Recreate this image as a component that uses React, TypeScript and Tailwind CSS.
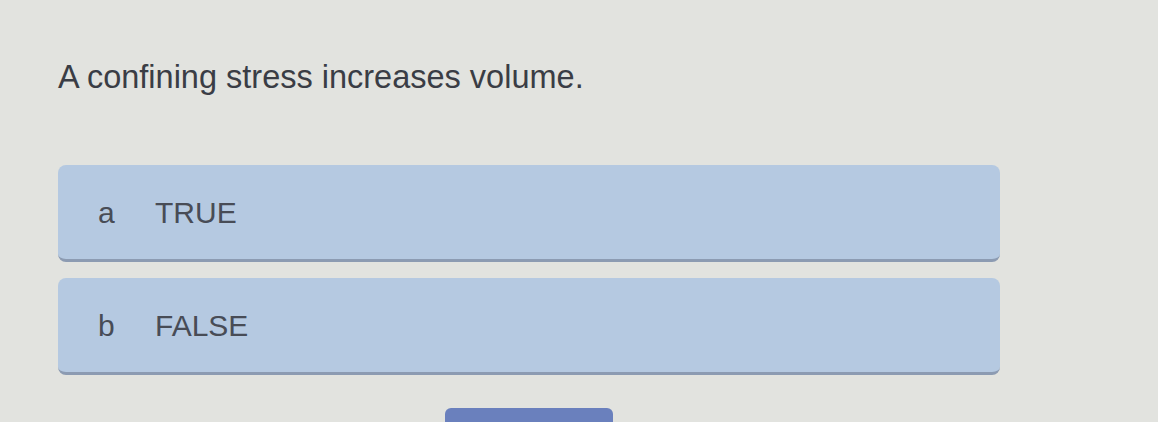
export default function App() {
  const options = [
    { key: "a", label: "TRUE" },
    { key: "b", label: "FALSE" },
  ];
  return (
    <div
      className="w-[1158px] h-[422px] overflow-hidden bg-[#e2e3df] pl-[58px] pr-[158px]"
      style={{ fontFamily: '"Liberation Sans", Arial, sans-serif' }}
    >
      <h1 className="pt-[57px] text-[32.5px] leading-[40px] text-[#3a3d45]">
        A confining stress increases volume.
      </h1>
      <div className="mt-[68px] flex flex-col gap-[16px]">
        {options.map((o) => (
          <div
            key={o.key}
            className="h-[97px] rounded-[8px] bg-[#b5c9e1] border-b-[3px] border-[#8c9bb2] flex items-center pl-[40px] text-[30px] text-[#484c56]"
          >
            <span className="w-[57px]">{o.key}</span>
            <span>{o.label}</span>
          </div>
        ))}
      </div>
      <div className="mt-[33px] ml-[387px] w-[168px] h-[30px] rounded-t-[6px] bg-[#6a80bd]" />
    </div>
  );
}
